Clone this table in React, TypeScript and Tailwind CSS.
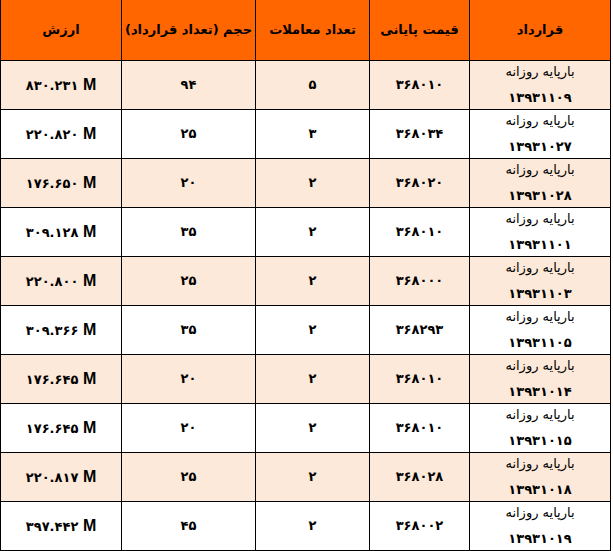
import React from "react";

const rows = [
  ["۸۳۰.۲۳۱", "۹۴", "۵", "۳۶۸۰۱۰", "۱۳۹۳۱۱۰۹"],
  ["۲۲۰.۸۲۰", "۲۵", "۳", "۳۶۸۰۳۴", "۱۳۹۳۱۰۲۷"],
  ["۱۷۶.۶۵۰", "۲۰", "۲", "۳۶۸۰۲۰", "۱۳۹۳۱۰۲۸"],
  ["۳۰۹.۱۲۸", "۳۵", "۲", "۳۶۸۰۱۰", "۱۳۹۳۱۱۰۱"],
  ["۲۲۰.۸۰۰", "۲۵", "۲", "۳۶۸۰۰۰", "۱۳۹۳۱۱۰۳"],
  ["۳۰۹.۳۶۶", "۳۵", "۲", "۳۶۸۲۹۳", "۱۳۹۳۱۱۰۵"],
  ["۱۷۶.۶۴۵", "۲۰", "۲", "۳۶۸۰۱۰", "۱۳۹۳۱۰۱۴"],
  ["۱۷۶.۶۴۵", "۲۰", "۲", "۳۶۸۰۱۰", "۱۳۹۳۱۰۱۵"],
  ["۲۲۰.۸۱۷", "۲۵", "۲", "۳۶۸۰۲۸", "۱۳۹۳۱۰۱۸"],
  ["۳۹۷.۴۴۲", "۴۵", "۲", "۳۶۸۰۰۲", "۱۳۹۳۱۰۱۹"],
];

const headers = ["ارزش", "حجم (تعداد قرارداد)", "تعداد معاملات", "قیمت پایانی", "قرارداد"];

export default function App() {
  return (
    <div className="w-[613px] h-[551px] bg-white font-['DejaVu_Sans',sans-serif] text-black">
      <div className="w-fit bg-black px-px pb-px grid grid-cols-[120px_133px_113px_99px_140px] gap-px">
        {headers.map((h, i) => (
          <div
            key={i}
            dir="rtl"
            className="h-[60px] bg-[#ff6600] flex items-center justify-center text-[13px] font-bold whitespace-nowrap"
          >
            {h}
          </div>
        ))}
        {rows.map((r, i) => {
          const bg = i % 2 === 0 ? "bg-[#fde9d9]" : "bg-white";
          return (
            <React.Fragment key={i}>
              <div className={`h-[48px] ${bg} flex items-center justify-center`}>
                <span dir="ltr" className="text-[13px] font-bold whitespace-nowrap">
                  {r[0]}{" "}
                  <span className="font-['Liberation_Sans',sans-serif] text-[16px] font-bold">M</span>
                </span>
              </div>
              <div className={`h-[48px] ${bg} flex items-center justify-center text-[13px] font-bold`}>
                {r[1]}
              </div>
              <div className={`h-[48px] ${bg} flex items-center justify-center text-[13px] font-bold`}>
                {r[2]}
              </div>
              <div className={`h-[48px] ${bg} flex items-center justify-center text-[13px] font-bold`}>
                {r[3]}
              </div>
              <div
                dir="rtl"
                className={`h-[48px] ${bg} flex flex-col items-center justify-center overflow-hidden leading-[26px]`}
              >
                <span className="text-[13px] whitespace-nowrap">بارپایه روزانه</span>
                <span className="text-[13px] font-bold whitespace-nowrap">{r[4]}</span>
              </div>
            </React.Fragment>
          );
        })}
      </div>
    </div>
  );
}
